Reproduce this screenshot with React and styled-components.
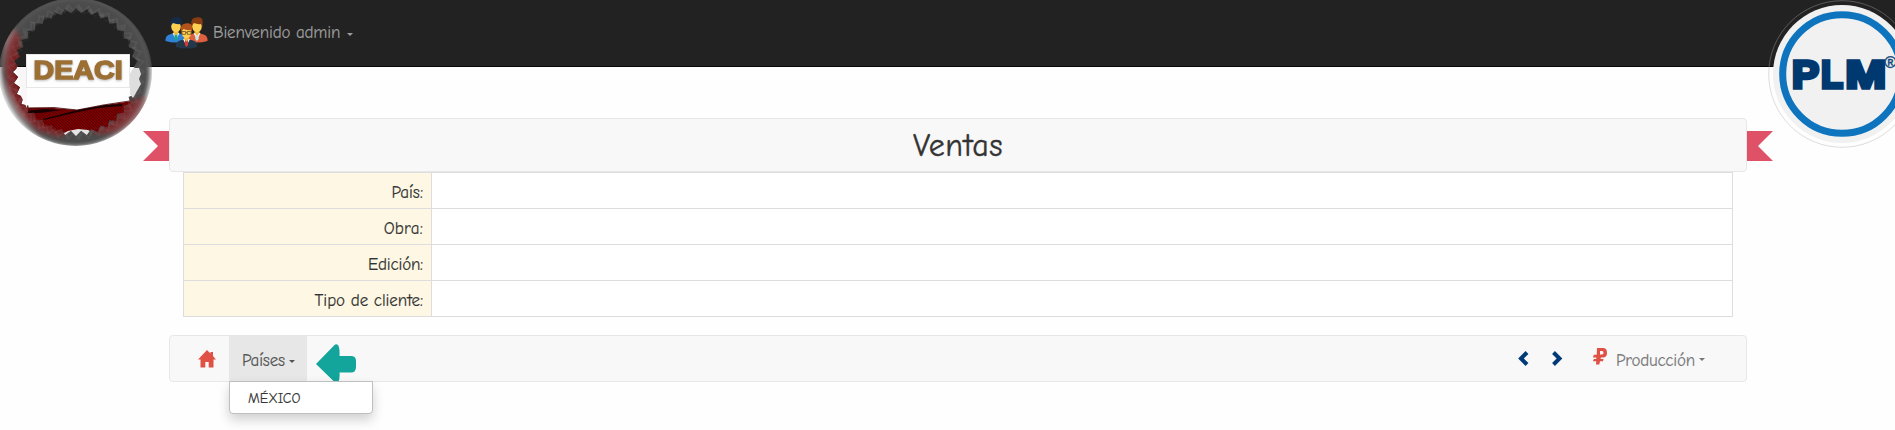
import React from "react";
import styled, { createGlobalStyle } from "styled-components";

const Global = createGlobalStyle`
  * { box-sizing: border-box; }
  html, body { margin: 0; padding: 0; }
  body {
    background: #fefefe;
    color: #333;
    font-family: "Comic Sans MS", "Comic Neue", Lato, sans-serif;
    font-size: 17px;
    -webkit-text-stroke: 0.15px currentColor;
    overflow: hidden;
  }
`;

const Page = styled.div`
  position: relative;
  height: 430px;
  overflow: hidden;
`;

const TopBar = styled.header`
  height: 67px;
  padding-left: 165px;
  display: flex;
  align-items: flex-start;
  background: #222;
  border-bottom: 1px solid #080808;
`;

const UserMenu = styled.div`
  display: flex;
  align-items: center;
  height: 66px;
  color: #9d9d9d;
`;

const Label = styled.span`
  display: inline-block;
  white-space: nowrap;
  width: ${(p) => (p.$w ? `${p.$w}px` : "auto")};
  letter-spacing: ${(p) => p.$track || 0}px;
`;

const UserName = styled(Label)`
  margin: 0 0 2px 5px;
`;

const SectionName = styled(Label)`
  margin: 3px 0 0 9px;
`;

const Caret = styled.i`
  width: 0;
  height: 0;
  margin-top: 2px;
  margin-left: ${(p) => p.$gap || 0}px;
  border-top: 3px solid currentColor;
  border-left: 3px solid transparent;
  border-right: 3px solid transparent;
`;

const LogoLeft = styled.div`
  position: absolute;
  left: 0;
  top: 0;
  line-height: 0;
  -webkit-text-stroke: 0;
`;

const LogoRight = styled(LogoLeft)`
  left: auto;
  right: 0;
`;

const Main = styled.main`
  width: 1578px;
  margin: 51px 0 0 169px;
`;

const TitlePanel = styled.section`
  position: relative;
  height: 54px;
  padding-top: 2px;
  display: flex;
  align-items: center;
  justify-content: center;
  background: #f8f8f8;
  border: 1px solid #e7e7e7;
  border-radius: 4px;
`;

const Title = styled.h1`
  margin: 0;
  font-size: 32px;
  font-weight: 400;
  line-height: 1;
  letter-spacing: 0.5px;
  -webkit-text-stroke: 0.4px currentColor;
`;

const Ribbon = styled.span`
  position: absolute;
  top: 12px;
  width: 26px;
  height: 30px;
  background: #df5167;
  ${(p) =>
    p.$side === "left"
      ? "left: -27px; clip-path: polygon(0 0, 100% 0, 100% 100%, 0 100%, 15px 50%);"
      : "right: -27px; clip-path: polygon(0 0, 100% 0, 11px 50%, 100% 100%, 0 100%);"}
`;

const Details = styled.div`
  width: 1550px;
  margin-left: 14px;
  border: 1px solid #ddd;
  background: #fff;
`;

const DetailRow = styled.div`
  display: grid;
  grid-template-columns: 248px 1fr;
  height: ${(p) => (p.$last ? 35 : 36)}px;
  border-bottom: ${(p) => (p.$last ? "0" : "1px solid #ddd")};
`;

const DetailName = styled.div`
  display: flex;
  align-items: center;
  justify-content: flex-end;
  padding: 3px 8px 0 0;
  background: #fdf7e3;
  border-right: 1px solid #ddd;
`;

const NavBar = styled.nav`
  height: 47px;
  margin-top: 18px;
  padding: 0 41px 0 28px;
  display: flex;
  align-items: center;
  justify-content: space-between;
  background: #f8f8f8;
  border: 1px solid #e7e7e7;
  border-radius: 4px;
  color: #777;
`;

const NavGroup = styled.div`
  display: flex;
  align-items: center;
  height: 45px;
`;

const NavItem = styled.div`
  position: relative;
  display: flex;
  align-items: center;
  width: 78px;
  height: 45px;
  margin-left: 13px;
  padding: 3px 0 0 13px;
  background: #e7e7e7;
  color: #555;
`;

const Menu = styled.div`
  position: absolute;
  left: 0;
  top: 45px;
  width: 144px;
  height: 33px;
  padding: 1px 0 0 18px;
  display: flex;
  align-items: center;
  background: #fff;
  border: 1px solid #bfbfbf;
  border-radius: 0 0 4px 4px;
  box-shadow: 0 6px 12px rgba(0, 0, 0, 0.18);
  color: #333;
  font-size: 14px;
`;

const Pointer = styled.svg`
  display: block;
  margin: 8px 0 0 9px;
  align-self: flex-start;
`;

const HomeIcon = styled.svg`
  display: block;
`;

const RubleIcon = styled.svg`
  display: block;
  margin: -4px 0 0 30px;
`;

const ellipse = (cx, cy, rx, ry) =>
  `M${cx - rx} ${cy}A${rx} ${ry} 0 1 1 ${cx + rx} ${cy}A${rx} ${ry} 0 1 1 ${cx - rx} ${cy}Z `;

const teeth = (cx, cy, rx, ry, n, depth) => {
  const pts = [];
  for (let i = 0; i < n * 2; i++) {
    const a = (i * Math.PI) / n;
    const d = i % 2 ? depth : 0;
    pts.push(`${(cx + (rx - d) * Math.cos(a)).toFixed(1)},${(cy + (ry - d) * Math.sin(a)).toFixed(1)}`);
  }
  return "M" + pts.join("L") + "Z";
};

function DeaciLogo() {
  const rim = ellipse(75.5, 72, 76.5, 74) + teeth(76, 72, 63, 64, 36, 5);
  return (
    <svg width="153" height="147" viewBox="0 0 153 147">
      <defs>
        <radialGradient id="grey" gradientUnits="userSpaceOnUse" cx="75.5" cy="72" r="76">
          <stop offset="0.78" stopColor="#484848" />
          <stop offset="0.92" stopColor="#4d4d4d" />
          <stop offset="0.95" stopColor="#585858" stopOpacity="0.9" />
          <stop offset="1" stopColor="#777" stopOpacity="0.4" />
        </radialGradient>
        <radialGradient id="wine" gradientUnits="userSpaceOnUse" cx="75.5" cy="72" r="76">
          <stop offset="0.78" stopColor="#741516" />
          <stop offset="0.88" stopColor="#7c3032" />
          <stop offset="0.93" stopColor="#824446" />
          <stop offset="1" stopColor="#a07c7d" />
        </radialGradient>
        <linearGradient id="haze" gradientUnits="userSpaceOnUse" x1="0" y1="110" x2="34" y2="90">
          <stop offset="0" stopColor="#fff" stopOpacity="0.75" />
          <stop offset="0.55" stopColor="#fff" stopOpacity="0" />
        </linearGradient>
        <filter id="soft"><feGaussianBlur stdDeviation="2.5" /></filter>
        <filter id="shade" x="-10%" y="-30%" width="120%" height="160%">
          <feDropShadow dx="0" dy="1" stdDeviation="1" floodColor="#888" floodOpacity="0.6" />
        </filter>
        <mask id="redParts">
          <g filter="url(#soft)">
            <path d="M5 40L14 28L20 36L19 70L26 104L45 122L68 132L60 137L38 131L19 115L7 92L4 66Z" fill="#fff" />
            <path d="M90 133L115 121L126 103L148 96L140 118L118 132L104 134Z" fill="#fff" />
          </g>
        </mask>
        <pattern id="weave" width="3" height="3" patternUnits="userSpaceOnUse">
          <rect width="3" height="3" fill="#7c0001" />
          <path d="M0 0L3 3" stroke="#500000" strokeWidth="0.9" />
        </pattern>
        <clipPath id="disc"><ellipse cx="75.5" cy="72" rx="68" ry="65" /></clipPath>
      </defs>
      <g clipPath="url(#disc)">
        <path d="M8 67H145V103L105 105L77 110L54 108H20Z" fill="#fefefe" />
        <path d="M20 108L54 108L77 110L105 105L145 99V140H10Z" fill="url(#weave)" />
        <path d="M22 111L46 109L62 110L40 113L24 113ZM43 119L78 110L105 105L122 104V106L98 108L78 112L44 120Z" fill="#180000" />
        <path d="M20 108L54 107.5L77 110L103 105L136 100" fill="none" stroke="#3c0000" strokeWidth="0.8" />
        <path d="M57 137L68 131L78 129L88 130L101 137Z" fill="#e5e5e5" />
      </g>
      <path d={rim} fill="url(#grey)" fillRule="evenodd" />
      <path d={rim} fill="url(#wine)" fillRule="evenodd" mask="url(#redParts)" />
      <path
        d={teeth(76, 72, 66, 66, 33, 8) + teeth(76, 72, 61, 61, 33, 1)}
        fill="#fff" fillOpacity="0.05" fillRule="evenodd"
      />
      <path d={teeth(76, 72, 68, 67, 41, 6)} fill="none" stroke="#fff" strokeOpacity="0.05" strokeWidth="2" />
      <path d={ellipse(75.5, 72, 76.5, 74) + ellipse(77, 70, 68, 66)} fill="url(#haze)" fillRule="evenodd" />
      <path d="M130 74L133 68L139 68L141 74L139 79L141 84L137 91L133 98L130 94Z" fill="#dedede" />
      <path d="M16 72L17 67H27V108L20 94L22 88L17 84L20 78Z" fill="#f8f6f6" />
      <rect x="26.5" y="54.5" width="103" height="33" fill="#fefefe" stroke="#e7e7e7" />
      <text
        x="33.6" y="79.3" textLength="89" lengthAdjust="spacingAndGlyphs"
        fontFamily="Liberation Sans, sans-serif" fontWeight="700" fontSize="25"
        fill="#9c6f33" stroke="#9c6f33" strokeWidth="1.4" filter="url(#shade)"
      >
        DEACI
      </text>
    </svg>
  );
}

function PlmLogo() {
  return (
    <svg width="131" height="149" viewBox="1764 0 131 149">
      <circle cx="1842" cy="74" r="73.3" fill="none" stroke="#aaa" strokeOpacity="0.4" />
      <circle cx="1842" cy="74" r="69" fill="#f1f1f1" />
      <circle cx="1842" cy="74" r="59.3" fill="none" stroke="#0f74be" strokeWidth="7" />
      <g
        fontFamily="Liberation Sans, sans-serif" fontWeight="700" fontSize="38"
        fill="#003870" stroke="#003870" strokeWidth="3.6"
      >
        <text x="1792" y="88.2" textLength="27" lengthAdjust="spacingAndGlyphs">P</text>
        <text x="1821" y="88.2" textLength="22" lengthAdjust="spacingAndGlyphs">L</text>
        <text x="1845.5" y="88.2" textLength="40.5" lengthAdjust="spacingAndGlyphs">M</text>
      </g>
      <text x="1884.6" y="68" fontFamily="Liberation Sans, sans-serif" fontSize="16" fill="#174a7c" stroke="#174a7c" strokeWidth="0.5">®</text>
    </svg>
  );
}

const people = [
  { x: 11, y: 0, hair: "#152c49", coat: "#2f82d7", tie: "#19a58b" },
  { x: 32, y: 0, hair: "#8b3d12", coat: "#df6040", tie: "#c8e9e2" },
  { x: 21.5, y: 6, hair: "#b3521b", coat: "#24384b", tie: "#d43b36" },
];

function PeopleIcon() {
  return (
    <svg width="43" height="32" viewBox="0 0 43 32">
      {people.map((p, i) => (
        <g key={i} transform={`translate(${p.x} ${p.y})`}>
          <path d="M-10.5 24V22Q-10 18 -5 17L0 16L5 17Q10 18 10.5 22V24Q0 27 -10.5 24Z" fill={p.coat} />
          <path d="M-3.5 16L0 23L3.5 16Z" fill="#f4f4f4" />
          <path d="M-1.3 17H1.3L1.7 22L0 24L-1.7 22Z" fill={p.tie} />
          <path d="M-2.5 12H2.5V16L0 18.5L-2.5 16Z" fill="#eeb83a" />
          <ellipse cx="0" cy="9.5" rx="4.8" ry="5.7" fill="#ffcf52" />
          <path d="M-5.6 10V4.5Q-5 1 -1 .5Q6-.5 5.6 5V10L4.3 7Q0 7.5-3 6L-4.8 8Z" fill={p.hair} />
          {i === 2 && (
            <path d="M-4.5 8.5H-.8V11.3H-4.5ZM.8 8.5H4.5V11.3H.8ZM-.8 9.5H.8" fill="none" stroke="#725223" strokeWidth="0.8" />
          )}
        </g>
      ))}
    </svg>
  );
}

const rows = [
  { name: "País:", track: 0 },
  { name: "Obra:", track: 0.2 },
  { name: "Edición:", track: -0.2 },
  { name: "Tipo de cliente:", track: -0.05 },
];

export default function App() {
  return (
    <Page>
      <Global />
      <TopBar>
        <UserMenu>
          <PeopleIcon />
          <UserName $w={128} $track={-0.15}>Bienvenido admin</UserName>
          <Caret $gap={6} />
        </UserMenu>
      </TopBar>
      <LogoLeft><DeaciLogo /></LogoLeft>
      <LogoRight><PlmLogo /></LogoRight>
      <Main>
        <TitlePanel>
          <Ribbon $side="left" />
          <Title>Ventas</Title>
          <Ribbon $side="right" />
        </TitlePanel>
        <Details>
          {rows.map((row, i) => (
            <DetailRow key={row.name} $last={i === rows.length - 1}>
              <DetailName><Label $track={row.track}>{row.name}</Label></DetailName>
              <div />
            </DetailRow>
          ))}
        </Details>
        <NavBar>
          <NavGroup>
            <HomeIcon width="18" height="18" viewBox="0 0 18 18">
              <path d="M9 0L12.5 3.5V2H15V6L18 9.5H15.5V17.5H10.7V12H7.3V17.5H2.5V9.5H0Z" fill="#df5145" />
            </HomeIcon>
            <NavItem>
              <Label $w={44} $track={-0.2}>Países</Label>
              <Caret $gap={3} />
              <Menu><Label>MÉXICO</Label></Menu>
            </NavItem>
            <Pointer width="40" height="38" viewBox="0 0 40 38">
              <path d="M0 20L18.5 1Q20-.5 22 1Q24 4 23.5 12H35Q40 12 40 17V23Q40 28.5 35 28.5H23.5Q24 34 22.5 38H18.5Z" fill="#13a49b" />
            </Pointer>
          </NavGroup>
          <NavGroup>
            <svg width="45" height="15" viewBox="0 0 45 15">
              <path d="M9 1.5L3 7.5L9 13.5M35.5 1.5L41.5 7.5L35.5 13.5" fill="none" stroke="#003b77" strokeWidth="4" />
            </svg>
            <RubleIcon width="14" height="17" viewBox="0 0 14 17">
              <path d="M4 0H10Q14 0 14 4.7T10 9.5H8L7.5 11H10.5L10 13.3H7L6.3 16.5H3L3.3 13.3H0L.8 11H3.3V9.5H0L.8 6.8H3.7ZM7 3V6.5H9Q10.5 6.5 10.5 4.7T9 3Z" fill="#df5145" fillRule="evenodd" />
            </RubleIcon>
            <SectionName $w={77} $track={-0.25}>Producción</SectionName>
            <Caret $gap={6} />
          </NavGroup>
        </NavBar>
      </Main>
    </Page>
  );
}
